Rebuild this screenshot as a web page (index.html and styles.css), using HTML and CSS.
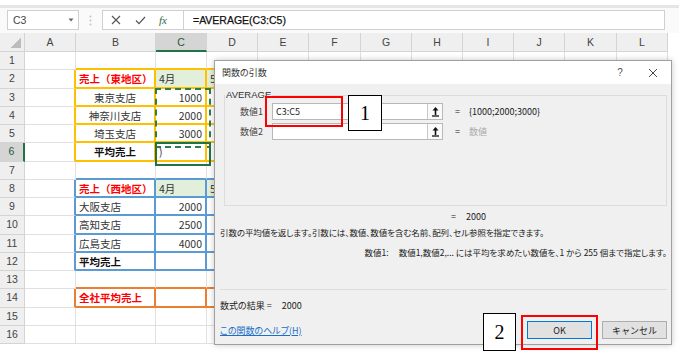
FILE: index.html
```html
<!DOCTYPE html>
<html lang="ja">
<head>
<meta charset="utf-8">
<title>関数の引数 - AVERAGE</title>
<link rel="stylesheet" href="styles.css">
</head>
<body>
<div class="page">

  <!-- 数式バー -->
  <div class="toolbar">
    <div class="namebox">
      <span>C3</span>
      <svg width="6" height="4" viewBox="0 0 6 4"><path d="M0.5 0.5h5l-2.5 3z" fill="#666"/></svg>
    </div>
    <div class="grip">
      <svg width="3" height="11" viewBox="0 0 3 11"><circle cx="1.5" cy="1.5" r="1" fill="#c4c4c4"/><circle cx="1.5" cy="5.5" r="1" fill="#c4c4c4"/><circle cx="1.5" cy="9.5" r="1" fill="#c4c4c4"/></svg>
    </div>
    <div class="fxbox">
      <svg width="10" height="10" viewBox="0 0 10 10"><path d="M1 1l8 8M9 1l-8 8" stroke="#555" stroke-width="1.1" fill="none"/></svg>
      <svg width="11" height="9" viewBox="0 0 11 9"><path d="M1 4.5l3 3.2 6-6.7" stroke="#555" stroke-width="1.2" fill="none"/></svg>
      <span class="fx">fx</span>
    </div>
    <div class="formula">=AVERAGE(C3:C5)</div>
  </div>

  <!-- シート -->
  <div class="sheet">
    <div class="corner"></div><div class="ch">A</div><div class="ch">B</div><div class="ch sel">C</div><div class="ch">D</div><div class="ch">E</div><div class="ch">F</div><div class="ch">G</div><div class="ch">H</div><div class="ch">I</div><div class="ch">J</div><div class="ch">K</div><div class="ch">L</div>

    <div class="rh">1</div><div></div><div class="yb"></div><div class="yb"></div><div class="yb"></div><div></div><div></div><div></div><div></div><div></div><div></div><div></div><div></div>
    <div class="rh">2</div><div class="yr"></div><div class="y red">売上（東地区）</div><div class="y hd">4月</div><div class="y hd">5月</div><div></div><div></div><div></div><div></div><div></div><div></div><div></div><div></div>
    <div class="rh">3</div><div class="yr"></div><div class="y ctr">東京支店</div><div class="y num ant">1000</div><div class="y"></div><div></div><div></div><div></div><div></div><div></div><div></div><div></div><div></div>
    <div class="rh">4</div><div class="yr"></div><div class="y ctr">神奈川支店</div><div class="y num">2000</div><div class="y"></div><div></div><div></div><div></div><div></div><div></div><div></div><div></div><div></div>
    <div class="rh">5</div><div class="yr"></div><div class="y ctr">埼玉支店</div><div class="y num">3000</div><div class="y"></div><div></div><div></div><div></div><div></div><div></div><div></div><div></div><div></div>
    <div class="rh sel">6</div><div class="yr"></div><div class="y ctr bold">平均売上</div><div class="y act">)</div><div class="y"></div><div></div><div></div><div></div><div></div><div></div><div></div><div></div><div></div>
    <div class="rh">7</div><div></div><div class="bb"></div><div class="bb"></div><div class="bb"></div><div></div><div></div><div></div><div></div><div></div><div></div><div></div><div></div>
    <div class="rh">8</div><div class="br"></div><div class="b red">売上（西地区）</div><div class="b hd">4月</div><div class="b hd">5月</div><div></div><div></div><div></div><div></div><div></div><div></div><div></div><div></div>
    <div class="rh">9</div><div class="br"></div><div class="b">大阪支店</div><div class="b num">2000</div><div class="b"></div><div></div><div></div><div></div><div></div><div></div><div></div><div></div><div></div>
    <div class="rh">10</div><div class="br"></div><div class="b">高知支店</div><div class="b num">2500</div><div class="b"></div><div></div><div></div><div></div><div></div><div></div><div></div><div></div><div></div>
    <div class="rh">11</div><div class="br"></div><div class="b">広島支店</div><div class="b num">4000</div><div class="b"></div><div></div><div></div><div></div><div></div><div></div><div></div><div></div><div></div>
    <div class="rh">12</div><div class="br"></div><div class="b bold">平均売上</div><div class="b"></div><div class="b"></div><div></div><div></div><div></div><div></div><div></div><div></div><div></div><div></div>
    <div class="rh">13</div><div></div><div class="ob"></div><div class="ob"></div><div class="ob"></div><div></div><div></div><div></div><div></div><div></div><div></div><div></div><div></div>
    <div class="rh">14</div><div class="or"></div><div class="o red">全社平均売上</div><div class="o"></div><div class="o"></div><div></div><div></div><div></div><div></div><div></div><div></div><div></div><div></div>
    <div class="rh">15</div><div></div><div></div><div></div><div></div><div></div><div></div><div></div><div></div><div></div><div></div><div></div><div></div>
    <div class="rh">16</div><div></div><div></div><div></div><div></div><div></div><div></div><div></div><div></div><div></div><div></div><div></div><div></div>
  </div>

  <!-- 関数の引数ダイアログ -->
  <div class="dialog">
    <div class="dlg-title">
      <span class="dlg-name">関数の引数</span>
      <span class="dlg-btn">?</span>
      <span class="dlg-btn">
        <svg width="10" height="10" viewBox="0 0 10 10"><path d="M1 1l8 8M9 1l-8 8" stroke="#333" stroke-width="0.9" fill="none"/></svg>
      </span>
    </div>
    <div class="dlg-body">
      <fieldset class="group">
        <legend>AVERAGE</legend>
        <div class="arg">
          <span class="arg-label">数値1</span>
          <div class="arg-input">
            <span class="arg-text">C3:C5</span>
            <span class="refbtn"><svg width="9" height="11" viewBox="0 0 9 11"><path d="M4.5 9V3" stroke="#111" stroke-width="1.6"/><path d="M1.5 4.5L4.5 1l3 3.5z" fill="#111"/><path d="M1 10h7" stroke="#111" stroke-width="1.3"/></svg></span>
          </div>
          <span class="eq">=</span>
          <span class="arg-val">{1000;2000;3000}</span>
        </div>
        <div class="arg">
          <span class="arg-label">数値2</span>
          <div class="arg-input">
            <span class="arg-text"></span>
            <span class="refbtn"><svg width="9" height="11" viewBox="0 0 9 11"><path d="M4.5 9V3" stroke="#111" stroke-width="1.6"/><path d="M1.5 4.5L4.5 1l3 3.5z" fill="#111"/><path d="M1 10h7" stroke="#111" stroke-width="1.3"/></svg></span>
          </div>
          <span class="eq">=</span>
          <span class="arg-val hint">数値</span>
        </div>
      </fieldset>

      <div class="total"><span class="eq">=</span><span>2000</span></div>
      <div class="desc">引数の平均値を返します。引数には、数値、数値を含む名前、配列、セル参照を指定できます。</div>
      <div class="argdesc"><span class="argdesc-name">数値1:</span>数値1,数値2,... には平均を求めたい数値を、1 から 255 個まで指定します。</div>
      <div class="rule"></div>
      <div class="result">数式の結果 =<span class="result-val">2000</span></div>
      <div class="footer">
        <a class="help" href="#">この関数のヘルプ(H)</a>
        <button class="btn ok">OK</button>
        <button class="btn">キャンセル</button>
      </div>
    </div>
  </div>

  <!-- 注釈 -->
  <div class="mark mark1"></div>
  <div class="step step1">1</div>
  <div class="mark mark2"></div>
  <div class="step step2">2</div>
</div>
</body>
</html>
```

FILE: styles.css
```css
*{ margin:0; padding:0; box-sizing:border-box;}
body{ background:#fff; font-family:"Liberation Sans", "Noto Sans CJK JP", sans-serif; color:#333;}

.page{ position:relative; width:679px; height:361px; overflow:hidden;}

/* 数式バー */
.toolbar{ height:33px; padding:10px 0 0 7px; display:flex; align-items:flex-start;
  background:linear-gradient(#fff 0 5px, #e6e6e6 5px 8px, #fafafa 8px);}
.namebox{ width:72px; height:20px; background:#fff; border:1px solid #d0d0d0; display:flex; align-items:center; justify-content:space-between; padding:0 4px 0 5px; font-size:10.5px; color:#444;}
.grip{ width:23px; height:20px; display:flex; align-items:center; justify-content:center;}
.fxbox{ width:81px; height:20px; background:#fff; border:1px solid #d0d0d0; border-right:none; display:flex; align-items:center; padding-left:8px; gap:14px;}
.fx{ font-family:"Liberation Serif", serif; font-style:italic; font-size:11px; color:#2b6a3e; margin-left:-1px;}
.formula{ width:482px; height:20px; background:#fff; border:1px solid #d0d0d0; padding-left:9px; font-size:10.5px; line-height:18px; color:#111; -webkit-text-stroke:0.25px #111;}

/* シート */
.sheet{ display:grid; grid-template-columns:25px 51px 80px 51px 51px 51px 52px 51px 51px 51px 51px 52px 51px;
  grid-template-rows:19px repeat(16, 18.25px); width:668px;
  font-family:"Noto Sans CJK JP", sans-serif; font-size:10.5px;}
.sheet > div{ border-right:1px solid #e0e0e0; border-bottom:1px solid #e0e0e0; line-height:17px; padding:0 3px; white-space:nowrap; overflow:hidden; color:#333;}

.sheet > .corner{ background:#efefef linear-gradient(to top left, #bcbcbc 0 50%, transparent 50%) no-repeat right 3px bottom 3px / 11px 11px; border-color:#d4d4d4;}
.sheet > .ch{ background:#efefef; border-color:#d4d4d4; text-align:center; font-family:"Liberation Sans", sans-serif; font-size:10.5px; line-height:18px; color:#444;}
.sheet > .ch.sel{ background:#d5d5d5; border-bottom:2px solid #217346; color:#215d36;}
.sheet > .rh{ background:#efefef; border-color:#d4d4d4; text-align:center; padding:0; font-family:"Liberation Sans", sans-serif; font-size:10.5px; color:#444;}
.sheet > .rh.sel{ background:#d5d5d5; border-right:2px solid #217346; color:#215d36;}

.sheet > .y{ border-right:2px solid #ffc000; border-bottom:2px solid #ffc000;}
.sheet > .yb{ border-bottom:2px solid #ffc000;}
.sheet > .yr{ border-right:2px solid #ffc000;}
.sheet > .b{ border-right:2px solid #5b9bd5; border-bottom:2px solid #5b9bd5;}
.sheet > .bb{ border-bottom:2px solid #5b9bd5;}
.sheet > .br{ border-right:2px solid #5b9bd5;}
.sheet > .o{ border-right:2px solid #ed7d31; border-bottom:2px solid #ed7d31;}
.sheet > .ob{ border-bottom:2px solid #ed7d31;}
.sheet > .or{ border-right:2px solid #ed7d31;}

.sheet > .red{ color:#ff0000; font-weight:bold;}
.sheet > .hd{ background:#e2efda;}
.sheet > .ctr{ text-align:center;}
.sheet > .num{ text-align:right;}
.sheet > .bold{ font-weight:bold; color:#111;}

/* 参照範囲の点線 */
.sheet > .ant{ position:relative; overflow:visible;}
.ant::after{ content:""; position:absolute; left:-1px; top:-1px; width:52px; height:56px; border:2px dashed #2e7d4a;}
.sheet > .act{ position:relative; overflow:visible;}
.act::after{ content:""; position:absolute; left:-1px; top:-1px; width:52px; height:20px; border:2px solid #217346;}

/* ダイアログ */
.dialog{ position:absolute; left:214px; top:60px; width:458px; height:285px; border:1px solid #a0a0a0; background:#f0f0f0;
  box-shadow:0 0 6px rgba(0,0,0,0.22); font-family:"Noto Sans CJK JP", sans-serif; font-size:9px; color:#222;
  font-feature-settings:"palt";}
.dlg-title{ height:23px; background:#fff; display:flex; align-items:center; padding:0 12px 0 7px;}
.dlg-name{ flex:1; color:#333;}
.dlg-btn{ width:12px; display:flex; justify-content:center; color:#555; font-size:10px; font-family:"Liberation Sans", sans-serif;}
.dlg-btn + .dlg-btn{ margin-left:21px;}

.dlg-body{ padding:0 4px 0 5px;}
.group{ margin:5px 0 0 4px; height:117px; border:1px solid #dcdcdc; padding:0;}
.group legend{ margin-left:0; padding:0 1px; font-family:"Liberation Sans", sans-serif; font-size:9.5px; color:#333; line-height:12px;}
.arg{ display:flex; align-items:center; height:17px; margin-top:3px;}
.arg:first-of-type{ margin-top:2px;}
.arg-label{ width:38px; text-align:right; margin-right:9px; color:#444;}
.arg-input{ width:171px; height:17px; background:#fff; border:1px solid #b8b8b8; display:flex; align-items:center;}
.arg-text{ flex:1; padding-left:3px; font-size:9px;}
.refbtn{ width:15px; height:15px; border-left:1px solid #c8c8c8; display:flex; align-items:center; justify-content:center; background:#fafafa;}
.eq{ margin:0 9px 0 12px;}
.arg-val{ font-size:9px;}
.hint{ color:#aaa;}

.total{ margin:5px 0 0 231px; line-height:12px;}
.total .eq{ margin:0 10px 0 0;}
.desc{ margin-top:3px; line-height:12px; font-size:8.5px; letter-spacing:-0.1px;}
.argdesc{ margin-top:8px; line-height:12px; text-align:right; font-size:8.5px;}
.argdesc-name{ margin-right:10px;}
.rule{ margin-top:31px; height:1px; background:#dcdcdc;}
.result{ margin-top:10px; line-height:12px;}
.result-val{ margin-left:10px;}
.footer{ margin-top:9px; display:flex; align-items:center; gap:10px;}
.help{ flex:1; color:#1a6fc9; text-decoration:underline;}
.btn{ width:65px; height:18px; background:#e1e1e1; border:1px solid #adadad; font-family:inherit; font-size:9px; color:#222;}
.btn.ok{ border-color:#0078d7;}

/* 注釈 */
.mark{ position:absolute; border:2px solid #ff0000;}
.mark1{ left:265px; top:96px; width:78px; height:31px;}
.mark2{ left:521px; top:315px; width:77px; height:35px;}
.step{ position:absolute; background:#fff; border:1px solid #000; font-family:"Liberation Serif", serif; font-size:20px; color:#000;
  display:flex; align-items:center; justify-content:center;}
.step1{ left:348px; top:95px; width:34px; height:36px;}
.step2{ left:483px; top:313px; width:33px; height:38px;}
```
